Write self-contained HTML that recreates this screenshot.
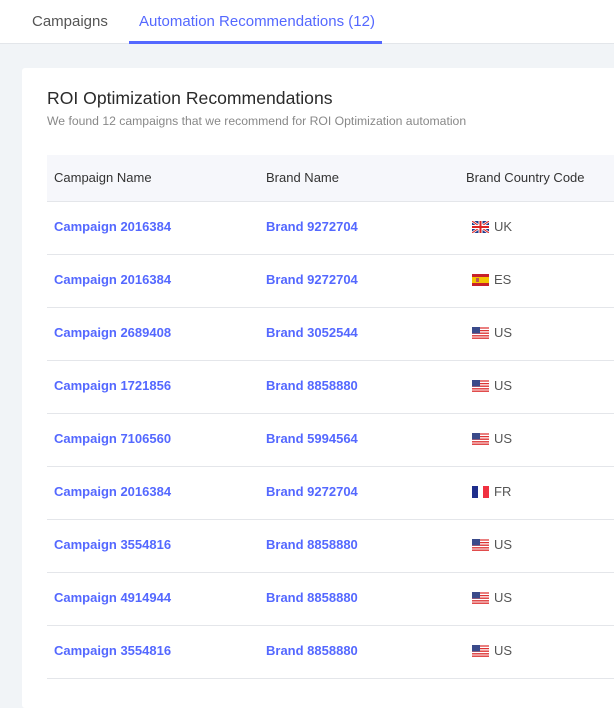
<!DOCTYPE html>
<html><head><style>
body{margin:0;width:614px;height:675px;overflow:hidden;background:#f1f4f7;font-family:"Liberation Sans",sans-serif;}
.tabs{position:absolute;left:0;top:0;width:614px;height:43px;background:#fff;border-bottom:1px solid #e3e6ea;}
.tab{position:absolute;top:13px;font-size:15px;color:#555;}
.tab.a{color:#5468ff;}
.ul{position:absolute;left:129px;top:41px;width:253px;height:3px;background:#5468ff;}
.card{position:absolute;left:22px;top:68px;width:620px;height:640px;background:#fff;border-radius:3px;}
h1{position:absolute;left:25px;top:20px;margin:0;font-size:17.6px;font-weight:normal;color:#2a2a2a;}
.sub{position:absolute;left:25px;top:46px;font-size:12.2px;color:#888;}
.th{position:absolute;left:25px;top:87px;width:600px;height:46px;background:#f6f7fb;border-bottom:1px solid #e4e6ea;}
.th span{position:absolute;top:15px;font-size:13px;color:#333;}
.row{position:absolute;left:25px;width:600px;height:52px;border-bottom:1px solid #e4e6ea;}
.row span{position:absolute;top:17px;font-size:13px;color:#5468ff;font-weight:bold;}
.row .cc{color:#555;left:447px;font-weight:normal;}
.row svg{position:absolute;left:425px;top:19px;}
</style></head><body>
<div class="tabs"><span class="tab" style="left:32px">Campaigns</span><span class="tab a" style="left:139px">Automation Recommendations (12)</span><div class="ul"></div></div>
<div class="card">
<h1>ROI Optimization Recommendations</h1>
<div class="sub">We found 12 campaigns that we recommend for ROI Optimization automation</div>
<div class="th"><span style="left:7px">Campaign Name</span><span style="left:219px">Brand Name</span><span style="left:419px">Brand Country Code</span></div>
</div>
<div style="position:absolute;left:22px;top:68px">
<div class="row" style="top:134px"><span style="left:7px">Campaign 2016384</span><span style="left:219px">Brand 9272704</span><svg width="17" height="12"><rect width="17" height="12" fill="#1f3c8c"/><path d="M0 0L17 12M17 0L0 12" stroke="#fff" stroke-width="2.5"/><path d="M0 0L17 12M17 0L0 12" stroke="#d22" stroke-width="1"/><path d="M8.5 0V12M0 6H17" stroke="#fff" stroke-width="4"/><path d="M8.5 0V12M0 6H17" stroke="#d22" stroke-width="2"/></svg><span class="cc">UK</span></div>
<div class="row" style="top:187px"><span style="left:7px">Campaign 2016384</span><span style="left:219px">Brand 9272704</span><svg width="17" height="12"><rect width="17" height="12" fill="#c8202a"/><rect y="3" width="17" height="6" fill="#f5c400"/><rect x="4" y="4" width="3" height="4" fill="#b55"/></svg><span class="cc">ES</span></div>
<div class="row" style="top:240px"><span style="left:7px">Campaign 2689408</span><span style="left:219px">Brand 3052544</span><svg width="17" height="12"><use href="#us"/></svg><span class="cc">US</span></div>
<div class="row" style="top:293px"><span style="left:7px">Campaign 1721856</span><span style="left:219px">Brand 8858880</span><svg width="17" height="12"><use href="#us"/></svg><span class="cc">US</span></div>
<div class="row" style="top:346px"><span style="left:7px">Campaign 7106560</span><span style="left:219px">Brand 5994564</span><svg width="17" height="12"><use href="#us"/></svg><span class="cc">US</span></div>
<div class="row" style="top:399px"><span style="left:7px">Campaign 2016384</span><span style="left:219px">Brand 9272704</span><svg width="17" height="12"><rect width="6" height="12" fill="#1f2e8c"/><rect x="6" width="5" height="12" fill="#fff"/><rect x="11" width="6" height="12" fill="#f03040"/></svg><span class="cc">FR</span></div>
<div class="row" style="top:452px"><span style="left:7px">Campaign 3554816</span><span style="left:219px">Brand 8858880</span><svg width="17" height="12"><use href="#us"/></svg><span class="cc">US</span></div>
<div class="row" style="top:505px"><span style="left:7px">Campaign 4914944</span><span style="left:219px">Brand 8858880</span><svg width="17" height="12"><use href="#us"/></svg><span class="cc">US</span></div>
<div class="row" style="top:558px"><span style="left:7px">Campaign 3554816</span><span style="left:219px">Brand 8858880</span><svg width="17" height="12"><use href="#us"/></svg><span class="cc">US</span></div>
</div>
<svg width="0" height="0" style="position:absolute"><defs><g id="us"><rect width="17" height="12" fill="#fff"/><path d="M0 1H17M0 3.6H17M0 6.2H17M0 8.8H17M0 11.2H17" stroke="#d33" stroke-width="1.3"/><rect width="8" height="6.5" fill="#3a4a8a"/></g></defs></svg>
</body></html>
